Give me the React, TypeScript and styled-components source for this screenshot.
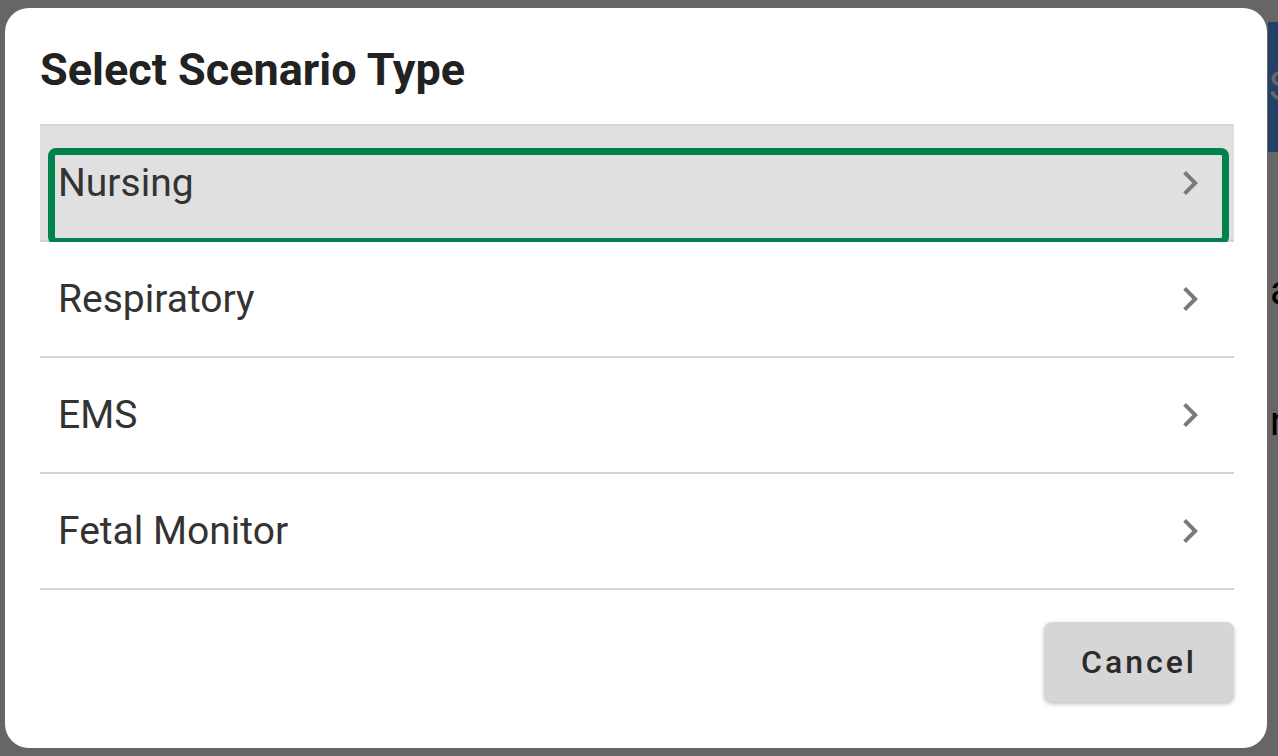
import styled, { createGlobalStyle } from 'styled-components';

const GlobalStyle = createGlobalStyle`
  html, body {
    margin: 0;
    padding: 0;
    width: 100%;
    height: 100%;
    overflow: hidden;
    background: #ffffff;
    font-family: Roboto, "Noto Sans", "Liberation Sans", sans-serif;
  }
`;

const scenarioTypes = ['Nursing', 'Respiratory', 'EMS', 'Fetal Monitor'];

const ChevronRight = () => (
  <svg width="48" height="48" viewBox="0 0 24 24" aria-hidden="true">
    <path d="M10 6L8.59 7.41 13.17 12l-4.58 4.59L10 18l6-6z" fill="#7a7a7a" />
  </svg>
);

export default function App() {
  return (
    <>
      <GlobalStyle />
      <Page>
        <PageMain />
        <PageSide>
          <SideButton>Scenarios</SideButton>
          <SideLine>add</SideLine>
          <SideLine>run</SideLine>
        </PageSide>
      </Page>
      <Backdrop>
        <Dialog role="dialog" aria-labelledby="scenario-title">
          <Title id="scenario-title">Select Scenario Type</Title>
          <List>
            {scenarioTypes.map((name, i) => (
              <Row key={name} $active={i === 0}>
                <RowLabel>{name}</RowLabel>
                <ChevronRight />
                {i === 0 && <FocusRing />}
              </Row>
            ))}
          </List>
          <Footer>
            <CancelButton>Cancel</CancelButton>
          </Footer>
        </Dialog>
      </Backdrop>
    </>
  );
}

const Page = styled.div`
  display: grid;
  grid-template-columns: 1268px 300px;
  width: 100vw;
  height: 100vh;
  overflow: hidden;
`;

const PageMain = styled.div`
  background: #ffffff;
`;

const PageSide = styled.div`
  display: flex;
  flex-direction: column;
  padding-top: 22px;
`;

const SideButton = styled.div`
  height: 130px;
  width: 200px;
  background: #5ca0ff;
  color: #ffffff;
  font-size: 40px;
  line-height: 130px;
  padding-left: 1px;
`;

const SideLine = styled.div`
  margin-top: 115px;
  padding-left: 2px;
  font-size: 40px;
  color: #000000;
  &:last-child {
    margin-top: 84px;
  }
`;

const Backdrop = styled.div`
  position: fixed;
  inset: 0;
  display: flex;
  align-items: flex-start;
  padding: 8px 11px 8px 5px;
  background: rgba(0, 0, 0, 0.6);
`;

const Dialog = styled.div`
  box-sizing: border-box;
  width: 100%;
  height: 740px;
  display: flex;
  flex-direction: column;
  padding: 35px 33px 0 35px;
  background: #ffffff;
  border-radius: 24px;
`;

const Title = styled.h2`
  margin: 0 0 27px;
  font-size: 45px;
  line-height: 54px;
  font-weight: 700;
  color: #222222;
`;

const List = styled.ul`
  list-style: none;
  margin: 0;
  padding: 0;
  border-top: 2px solid #d6d6d6;
`;

const Row = styled.li<{ $active?: boolean }>`
  position: relative;
  box-sizing: border-box;
  height: 116px;
  display: flex;
  align-items: center;
  justify-content: space-between;
  padding: 0 20px 0 18px;
  border-bottom: 2px solid #d3d3d3;
  background: ${({ $active }) => ($active ? '#e0e0e0' : '#ffffff')};
`;

const RowLabel = styled.span`
  font-size: 39px;
  color: #333333;
`;

const FocusRing = styled.span`
  position: absolute;
  top: 22px;
  left: 8px;
  right: 5px;
  bottom: -5px;
  border: 7px solid #00834a;
  border-radius: 8px;
  pointer-events: none;
`;

const Footer = styled.div`
  display: flex;
  justify-content: flex-end;
  margin-top: 32px;
`;

const CancelButton = styled.button`
  width: 190px;
  height: 80px;
  border: none;
  border-radius: 8px;
  background: #d6d6d6;
  color: #2b2b2b;
  font-family: Roboto, "Noto Sans", "Liberation Sans", sans-serif;
  font-size: 32px;
  font-weight: 500;
  letter-spacing: 3px;
  box-shadow: 0 2px 4px rgba(0, 0, 0, 0.25);
  cursor: pointer;
`;
